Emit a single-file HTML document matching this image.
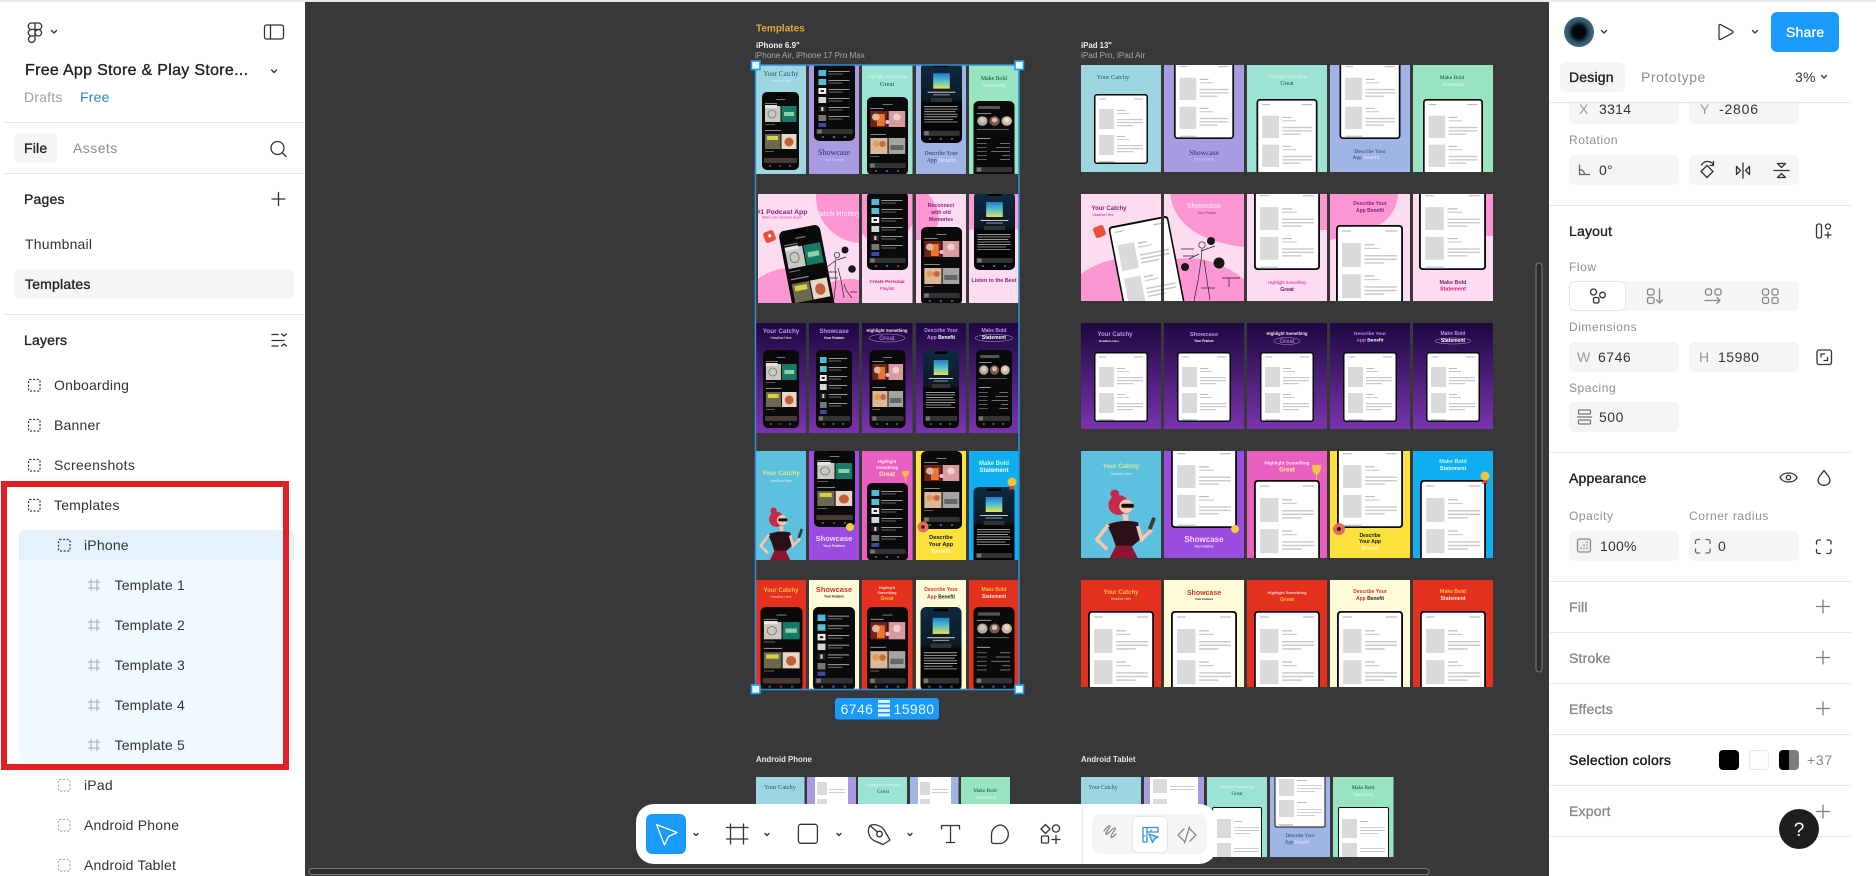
<!DOCTYPE html>
<html lang="en"><head><meta charset="utf-8"><title>Free App Store &amp; Play Store - Figma</title>
<style>
*{box-sizing:border-box;margin:0;padding:0}
html{width:1876px;height:876px;overflow:hidden;background:#383838}
body{width:1876px;height:876px;overflow:hidden;background:#383838;font-family:"Liberation Sans",Arial,sans-serif;position:relative;filter:blur(.3px)}
#cv,#ic{position:absolute;left:0;top:0;width:1876px;height:876px}
#ic{z-index:5;pointer-events:none}
.pn{position:absolute;background:#fff;top:0;height:876px}
.top{position:absolute;left:0;top:0;width:1876px;height:2px;background:#e9e9e9;z-index:6}
.t{position:absolute;white-space:nowrap;line-height:20px;height:20px;margin-top:-10px;font-size:14px;letter-spacing:.2px;color:#333;z-index:4}
.b{-webkit-text-stroke:.35px currentColor;color:#222}
.g{color:#8d8d8d}
.l{font-size:12px;letter-spacing:.55px;color:#8f8f8f}
.h{position:absolute;height:1px;background:#e6e6e6;z-index:3}
.i{position:absolute;background:#f5f5f5;border-radius:6px;z-index:2}
.sv{fill:none;stroke:#333;stroke-width:1.3;stroke-linecap:round;stroke-linejoin:round}
#cv text{font-family:"Liberation Sans",Arial,sans-serif;text-anchor:middle;font-weight:bold}
#cv text.s{font-family:"Liberation Serif",serif;font-weight:normal}
#cv text.n{font-weight:normal}
#cv text.a{text-anchor:start}
</style></head><body>

<svg id="cv" viewBox="0 0 1876 876" xmlns="http://www.w3.org/2000/svg">
<defs>
<linearGradient id="sky" x1="0" y1="0" x2="0" y2="1"><stop offset="0" stop-color="#1c7fd0"/><stop offset=".6" stop-color="#68c8c0"/><stop offset="1" stop-color="#f0e040"/></linearGradient>
<linearGradient id="nv" x1="0" y1="0" x2="0" y2="1"><stop offset="0" stop-color="#0e2a40"/><stop offset=".45" stop-color="#0c1a26"/><stop offset=".5" stop-color="#050505"/></linearGradient>
<linearGradient id="pu" x1="0" y1="0" x2="0" y2="1"><stop offset="0" stop-color="#1c0740"/><stop offset="1" stop-color="#7a35ae"/></linearGradient>

<symbol id="A" viewBox="0 0 37 78" preserveAspectRatio="none"><rect width="37" height="78" rx="5" fill="#0a0a0a"/><rect x="13" y="1.5" width="11" height="2.5" rx="1.2" fill="#000"/><rect x="14" y="7" width="9" height="1" fill="#777"/><rect x="3" y="11" width="12" height="1" fill="#777"/><rect x="3" y="14" width="15.500" height="16" fill="#c9c9c2"/><circle cx="10" cy="22" r="4" fill="none" stroke="#777" stroke-width=".8"/><rect x="3" y="13" width="12" height="3" fill="#e8e4dc"/><rect x="19.500" y="14" width="15" height="16" fill="#177a68"/><rect x="22" y="20" width="10" height="4" fill="#8ed0a0"/><rect x="3" y="32" width="10" height=".9" fill="#666"/><rect x="3" y="38" width="16" height="1" fill="#888"/><rect x="3" y="42" width="15.500" height="15" fill="#6b6a50"/><rect x="5" y="44" width="11" height="4" fill="#d8d040"/><rect x="19.500" y="42" width="15" height="15" fill="#e6d8c4"/><circle cx="27" cy="50" r="4.500" fill="#c0603a"/><rect x="3" y="59" width="9" height=".9" fill="#666"/><rect x="2" y="66" width="33" height="5" rx="1" fill="#4a3a36"/><rect x="7" y="73" width="2" height="2" fill="#555"/><rect x="17" y="73" width="2" height="2" fill="#7a2a2a"/><rect x="27" y="73" width="2" height="2" fill="#555"/></symbol>

<symbol id="B" viewBox="0 0 37 78" preserveAspectRatio="none"><rect width="37" height="78" rx="5" fill="#0a0a0a"/><rect x="4" y="7" width="7" height="6" fill="#4fb7d8"/><rect x="13" y="8" width="19" height="1" fill="#999"/><rect x="13" y="10.500" width="13" height="1" fill="#666"/><rect x="4" y="16" width="7" height="6" fill="#59bfd0"/><rect x="13" y="17" width="19" height="1" fill="#999"/><rect x="13" y="19.500" width="13" height="1" fill="#666"/><rect x="4" y="25" width="7" height="6" fill="#eeeeee"/><rect x="6" y="27" width="3" height="2" fill="#223"/><rect x="13" y="26" width="19" height="1" fill="#999"/><rect x="13" y="28.500" width="13" height="1" fill="#666"/><rect x="4" y="34" width="7" height="6" fill="#cfd8d8"/><rect x="13" y="35" width="19" height="1" fill="#999"/><rect x="13" y="37.500" width="13" height="1" fill="#666"/><rect x="4" y="43" width="7" height="6" fill="#222"/><rect x="6.500" y="44" width="2" height="4" fill="#ccc"/><rect x="13" y="44" width="19" height="1" fill="#999"/><rect x="13" y="46.500" width="13" height="1" fill="#666"/><rect x="4" y="52" width="7" height="6" fill="#777"/><rect x="13" y="53" width="19" height="1" fill="#999"/><rect x="13" y="55.500" width="13" height="1" fill="#666"/><rect x="4" y="60" width="7" height="4" fill="#3a4aa0"/><rect x="2" y="66" width="33" height="5" rx="1" fill="#333"/><rect x="3" y="66.500" width="4" height="4" fill="#777"/><rect x="7" y="73" width="2" height="2" fill="#555"/><rect x="17" y="73" width="2" height="2" fill="#55a"/><rect x="27" y="73" width="2" height="2" fill="#555"/></symbol>

<symbol id="C" viewBox="0 0 37 78" preserveAspectRatio="none"><rect width="37" height="78" rx="5" fill="#0a0a0a"/><rect x="14" y="7" width="9" height="1" fill="#777"/><rect x="3" y="11" width="12" height="1" fill="#888"/><rect x="3" y="14" width="15.500" height="16" fill="#6e2416"/><rect x="9" y="17" width="7" height="12" fill="#e8762c"/><circle cx="8" cy="20" r="3.500" fill="#e0b4a0"/><rect x="19.500" y="14" width="15" height="16" fill="#d79aa0"/><circle cx="27" cy="20" r="3.500" fill="#f0d0c4"/><circle cx="18.500" cy="25" r="2" fill="#f0b8e8"/><rect x="3" y="37" width="14" height="1" fill="#888"/><rect x="3" y="41" width="15.500" height="16" fill="#dcb898"/><circle cx="8" cy="47" r="3" fill="#d8a050"/><circle cx="14" cy="47" r="3" fill="#c86a3c"/><rect x="19.500" y="41" width="15" height="16" fill="#a4a4a0"/><rect x="21" y="48" width="12" height="5" fill="#666"/><rect x="3" y="59" width="8" height=".9" fill="#666"/><rect x="2" y="66" width="33" height="5" rx="1" fill="#333"/><rect x="3" y="66.500" width="4" height="4" fill="#777"/><rect x="7" y="73" width="2" height="2" fill="#555"/><rect x="17" y="73" width="2" height="2" fill="#55a"/><rect x="27" y="73" width="2" height="2" fill="#555"/></symbol>

<symbol id="D" viewBox="0 0 37 78" preserveAspectRatio="none"><rect width="37" height="78" rx="5" fill="url(#nv)"/><rect x="12" y="1.500" width="13" height="2.500" rx="1.200" fill="#000"/><rect x="11" y="10" width="15" height="15" fill="url(#sky)"/><rect x="6" y="28" width="25" height="1" fill="#ccc"/><rect x="11" y="30.500" width="15" height="1" fill="#999"/><rect x="9" y="34" width="19" height="4" rx="1" fill="#333"/><rect x="3" y="42" width="30" height=".9" fill="#aaa"/><rect x="3" y="44.500" width="30" height=".9" fill="#999"/><rect x="3" y="47" width="28" height=".9" fill="#aaa"/><rect x="3" y="49.500" width="30" height=".9" fill="#999"/><rect x="3" y="52" width="30" height=".9" fill="#aaa"/><rect x="3" y="54.500" width="26" height=".9" fill="#999"/><rect x="3" y="57" width="30" height=".9" fill="#888"/><rect x="2" y="66" width="33" height="5" rx="1" fill="#333"/><rect x="3" y="66.500" width="4" height="4" fill="#777"/><rect x="7" y="73" width="2" height="2" fill="#555"/><rect x="17" y="73" width="2" height="2" fill="#55a"/><rect x="27" y="73" width="2" height="2" fill="#555"/></symbol>

<symbol id="E" viewBox="0 0 37 78" preserveAspectRatio="none"><rect width="37" height="78" rx="5" fill="#0a0a0a"/><rect x="4" y="5" width="20" height="3" rx="1" fill="#555"/><rect x="3" y="12" width="13" height="1" fill="#888"/><circle cx="8" cy="20" r="4.700" fill="#aab0a8"/><circle cx="8" cy="19" r="2.400" fill="#e0c8b8"/><circle cx="19" cy="20" r="4.700" fill="#7a5a50"/><circle cx="19" cy="19" r="2.400" fill="#e8b8a8"/><circle cx="30" cy="20" r="4.700" fill="#cdb9a0"/><circle cx="30" cy="19" r="2.400" fill="#f0d8c8"/><rect x="3" y="28" width="29" height=".9" fill="#666"/><rect x="3" y="37" width="12" height="1" fill="#999"/><rect x="3" y="42" width="9" height=".9" fill="#666"/><rect x="24" y="42" width="9" height=".9" fill="#777"/><rect x="3" y="46" width="9" height=".9" fill="#666"/><rect x="20" y="46" width="13" height=".9" fill="#777"/><rect x="3" y="50" width="9" height=".9" fill="#666"/><rect x="16" y="50" width="17" height=".9" fill="#777"/><rect x="3" y="54" width="9" height=".9" fill="#666"/><rect x="26" y="54" width="7" height=".9" fill="#777"/><rect x="3" y="58" width="9" height=".9" fill="#666"/><rect x="24" y="58" width="9" height=".9" fill="#777"/><rect x="2" y="66" width="33" height="5" rx="1" fill="#333"/><rect x="3" y="66.500" width="4" height="4" fill="#777"/><rect x="7" y="73" width="2" height="2" fill="#555"/><rect x="17" y="73" width="2" height="2" fill="#55a"/><rect x="27" y="73" width="2" height="2" fill="#555"/></symbol>

<symbol id="T" viewBox="0 0 54 70" preserveAspectRatio="none"><rect width="54" height="70" rx="3" fill="#0a0a0a"/><rect x="1.500" y="1.500" width="51" height="67" rx="1.800" fill="#fff"/><rect x="5" y="4.500" width="7" height="1" fill="#bbb"/><rect x="40" y="4.500" width="9" height="1" fill="#bbb"/><rect x="5" y="15" width="15" height="20" fill="#d8dadb"/><rect x="23" y="16" width="8" height="1" fill="#bbb"/><rect x="23" y="19" width="12" height="1" fill="#ccc"/><rect x="23" y="25" width="26" height="1.200" fill="#c8c8c8"/><rect x="23" y="28" width="26" height="1.200" fill="#c8c8c8"/><rect x="23" y="31" width="16" height="1.200" fill="#c8c8c8"/><rect x="5" y="41" width="15" height="20" fill="#d8dadb"/><rect x="23" y="42" width="8" height="1" fill="#bbb"/><rect x="23" y="45" width="12" height="1" fill="#ccc"/><rect x="23" y="51" width="26" height="1.200" fill="#c8c8c8"/><rect x="23" y="54" width="26" height="1.200" fill="#c8c8c8"/><rect x="23" y="57" width="16" height="1.200" fill="#c8c8c8"/><rect x="5" y="67" width="15" height="1.500" fill="#ccc"/></symbol>

<symbol id="W" viewBox="0 0 50 56" preserveAspectRatio="none"><circle cx="17" cy="4" r="3.500" fill="#c42a4c"/><circle cx="20" cy="13" r="8" fill="#c42a4c"/><path d="M23 20l1 7h3l1-6z" fill="#f6c8ae"/><circle cx="26" cy="14" r="5.500" fill="#f6c8ae"/><rect x="22" y="12" width="10" height="3.200" rx="1.500" fill="#111"/><path d="M11 29q12-5 24-2l3 13-8 7H18l-3-9z" fill="#2b1018"/><path d="M18 46h12l5 10H13z" fill="#8e1433"/><path d="M12 29L3 41l8 8" fill="none" stroke="#f6c8ae" stroke-width="2.800"/><path d="M35 30l3 11 8-8" fill="none" stroke="#f6c8ae" stroke-width="2.800"/><rect x="44.500" y="23" width="3" height="10" rx="1" fill="#3a3a3a" transform="rotate(20 46 28)"/></symbol>
</defs>

<text class="a" x="756" y="31.500" fill="#e3a73e" font-size="10">Templates</text>
<text class="a" x="756" y="48" fill="#ededed" font-size="8">iPhone 6.9"</text>
<text class="a n" x="755" y="58" fill="#a8a8a8" font-size="8.100">iPhone Air, iPhone 17 Pro Max</text>
<text class="a" x="1081" y="48" fill="#ededed" font-size="7.800">iPad  13"</text>
<text class="a n" x="1081" y="58" fill="#a8a8a8" font-size="8.200">iPad Pro, iPad Air</text>

<!-- iPhone row 1 -->
<svg x="756" y="65" width="50" height="109"><rect width="50" height="109" fill="#9dd5e1"/><text class="s" x="25" y="11" fill="#1f5672" font-size="7">Your Catchy</text><text class="n" x="25" y="17" fill="#c8eef6" font-size="3.200">Headline Here</text><use href="#A" x="6" y="27" width="37" height="78"/></svg>
<svg x="809" y="65" width="50" height="109"><rect width="50" height="109" fill="#a99be0"/><use href="#B" x="5" y="-2" width="41" height="78"/><text class="s" x="25" y="90" fill="#28306f" font-size="8">Showcase</text><text class="n" x="25" y="96" fill="#d8d0fa" font-size="3.400">Your Feature</text></svg>
<svg x="862" y="65" width="50.500" height="109"><rect width="51" height="109" fill="#9ce3d4"/><text class="n" x="25" y="13" fill="#d8fbf0" font-size="4.300">Highlight Something</text><text class="s" x="25" y="21" fill="#154f5c" font-size="6.500">Great</text><use href="#C" x="5" y="32" width="41" height="78"/></svg>
<svg x="916" y="65" width="50" height="109"><rect width="50" height="109" fill="#a0b5e6"/><use href="#D" x="5" y="-2" width="41" height="80"/><text class="s" x="25" y="90" fill="#26356f" font-size="5.800">Describe Your</text><text class="s" x="25" y="97" fill="#26356f" font-size="5.800">App <tspan fill="#e4ecff">Benefit</tspan></text></svg>
<svg x="969" y="65" width="50" height="109"><rect width="50" height="109" fill="#98e3c0"/><text class="s" x="25" y="15" fill="#0e4a38" font-size="5.800">Make Bold</text><text class="s" x="25" y="22" fill="#d8fbec" font-size="5.800">Statement</text><use href="#E" x="4.500" y="36" width="41" height="78"/></svg>

<!-- iPhone row 2 -->
<svg x="758" y="194" width="101" height="109"><rect width="101" height="109" fill="#fbdcf0"/><rect width="50" height="109" fill="#fddcf0"/><circle cx="104" cy="3" r="46" fill="#fc97d3"/><path d="M0 85Q20 70 45 76V109H0z" fill="#fc97d3"/><path d="M65 92Q85 82 101 86V109H65z" fill="#fc97d3"/><text x="24" y="20" fill="#8c1f78" font-size="6.800">#1 Podcast App</text><text class="n" x="24" y="24.500" fill="#e0409a" font-size="3.300">Watch your favourite shows</text><text x="79" y="22" fill="#fdd9ef" font-size="7.200">Watch History</text><rect x="6" y="37" width="11" height="11" rx="2.500" fill="#ec4f38" transform="rotate(-22 11.500 42.500)"/><path d="M10 42l1.500 2 2-2a1 1 0 0 0-3.500 0z" fill="#fff"/><g transform="translate(20,38) rotate(-11)"><use href="#A" width="42" height="100"/></g><g fill="none" stroke="#222" stroke-width=".7"><circle cx="79" cy="61" r="2.700"/><path d="M78 64l-1 10 1 12-2 19M80 74l3 12 3 18M79 66l9-3M77 67l-8 6M69 78h10M72 84h8"/><path d="M86 90l2 6 6 8M92 98h7"/></g><circle cx="87" cy="56" r="3.500" fill="#161616"/><circle cx="94" cy="75" r="3.800" fill="#161616"/></svg>
<svg x="862" y="194" width="50.500" height="109"><rect width="51" height="109" fill="#fbdcf0"/><path d="M0 0H51V30Q40 48 20 48Q8 48 0 40z" fill="#fc97d3"/><use href="#B" x="5" y="-2" width="41" height="78"/><text x="25" y="89" fill="#c41a80" font-size="4.600">Create Personal</text><text class="n" x="25" y="96" fill="#c41a80" font-size="4.600">Playlist</text></svg>
<svg x="916" y="194" width="50" height="109"><rect width="50" height="109" fill="#fbdcf0"/><path d="M0 0H12Q32 22 14 46Q6 46 0 46z" fill="#fc97d3"/><text x="25" y="13" fill="#8c1f78" font-size="5.200">Reconnect</text><text x="25" y="20" fill="#8c1f78" font-size="5.200">with old</text><text x="25" y="27" fill="#8c1f78" font-size="5.200">Memories</text><use href="#C" x="5" y="33" width="41" height="78"/></svg>
<svg x="969" y="194" width="50" height="109"><rect width="50" height="109" fill="#fbdcf0"/><path d="M0 0H50V36Q30 30 0 36z" fill="#fc97d3" opacity=".9"/><use href="#D" x="5" y="-2" width="41" height="78"/><text x="25" y="88" fill="#8c1f78" font-size="5.400">Listen to the Best</text></svg>

<!-- iPhone row 3 -->
<svg x="756" y="323" width="50" height="110"><rect width="50" height="110" fill="url(#pu)"/><text x="25" y="10" fill="#c68cf5" font-size="6.300">Your Catchy</text><text class="n" x="25" y="16" fill="#eee" font-size="3.300">Headline Here</text><use href="#A" x="7" y="27" width="36" height="78"/></svg>
<svg x="809" y="323" width="50" height="110"><rect width="50" height="110" fill="url(#pu)"/><text x="25" y="10" fill="#c68cf5" font-size="6">Showcase</text><text x="25" y="16" fill="#eee" font-size="3.400">Your Feature</text><use href="#B" x="7" y="27" width="36" height="78"/></svg>
<svg x="862" y="323" width="50.500" height="110"><rect width="51" height="110" fill="url(#pu)"/><text x="25" y="9" fill="#f0e6fa" font-size="4.200">Highlight Something</text><text class="n" x="25" y="17" fill="#c68cf5" font-size="6.200">Great</text><ellipse cx="25" cy="15" rx="18" ry="4" fill="none" stroke="#d7c6f0" stroke-width=".4"/><use href="#C" x="7.500" y="27" width="36" height="78"/></svg>
<svg x="916" y="323" width="50" height="110"><rect width="50" height="110" fill="url(#pu)"/><text x="25" y="9" fill="#c68cf5" font-size="5">Describe Your</text><text x="25" y="16" fill="#c68cf5" font-size="5">App <tspan fill="#fff">Benefit</tspan></text><use href="#D" x="7" y="27" width="36" height="78"/></svg>
<svg x="969" y="323" width="50" height="110"><rect width="50" height="110" fill="url(#pu)"/><text x="25" y="9" fill="#c68cf5" font-size="5">Make Bold</text><text x="25" y="16" fill="#fff" font-size="5">Statement</text><ellipse cx="25" cy="15" rx="19" ry="3.500" fill="none" stroke="#d7c6f0" stroke-width=".4"/><use href="#E" x="7" y="27" width="36" height="78"/></svg>

<!-- iPhone row 4 -->
<svg x="756" y="451" width="50" height="109"><rect width="50" height="109" fill="#5cc0de"/><text x="25" y="24" fill="#d8f08e" font-size="6.500">Your Catchy</text><text class="n" x="25" y="31" fill="#d6f2fb" font-size="3.400">Headline Here</text><use href="#W" x="2" y="56" width="46" height="53"/></svg>
<svg x="809" y="451" width="50" height="109"><rect width="50" height="109" fill="#9a4be0"/><use href="#A" x="5" y="-2" width="41" height="78"/><circle cx="41" cy="76" r="4" fill="#f6cf3e"/><text x="25" y="90" fill="#f8d8f8" font-size="7.500">Showcase</text><text x="25" y="96" fill="#f0e8fa" font-size="3.600">Your Feature</text></svg>
<svg x="862" y="451" width="50.500" height="109"><rect width="51" height="109" fill="#e85fc0"/><text x="25" y="12" fill="#fde6f8" font-size="4.300">Highlight</text><text x="25" y="18" fill="#fde6f8" font-size="4.300">Something</text><text x="25" y="25" fill="#fdf09a" font-size="6">Great</text><path d="M41 20h6q0 5-3 6v5h-1v-5q-3-1-3-6z" fill="#f2c53e"/><use href="#B" x="5" y="32" width="41" height="78"/></svg>
<svg x="916" y="451" width="50" height="109"><rect width="50" height="109" fill="#fde23e"/><use href="#C" x="5" y="0" width="41" height="78"/><circle cx="7" cy="76" r="5.500" fill="#ea6a5e"/><circle cx="7" cy="76" r="1.800" fill="#311"/><text x="25" y="88" fill="#141414" font-size="5.600">Describe</text><text x="25" y="95" fill="#141414" font-size="5.600">Your App</text><text x="25" y="102" fill="#fff8c8" font-size="5.600">Benefit</text></svg>
<svg x="969" y="451" width="50" height="109"><rect width="50" height="109" fill="#10aef0"/><text x="25" y="14" fill="#c2fbd8" font-size="6">Make Bold</text><text x="25" y="21" fill="#e8fff2" font-size="6">Statement</text><use href="#D" x="4.500" y="36" width="41" height="78"/><circle cx="43" cy="31" r="4.500" fill="#f3c33a"/><path d="M41 35l-1 4 3-1 3 1-1-4z" fill="#d64a30"/></svg>

<!-- iPhone row 5 -->
<svg x="756" y="580" width="50" height="109"><rect width="50" height="109" fill="#e3301f"/><text x="25" y="12" fill="#f8c03c" font-size="6">Your Catchy</text><text class="n" x="25" y="18" fill="#f6d0a0" font-size="3.300">Headline Here</text><use href="#A" x="4.500" y="27" width="42" height="84"/></svg>
<svg x="809" y="580" width="50" height="109"><rect width="50" height="109" fill="#fdfbd8"/><text x="25" y="12" fill="#d43426" font-size="7.400">Showcase</text><text x="25" y="17.500" fill="#222" font-size="3.300">Your Feature</text><use href="#B" x="4" y="27" width="42" height="84"/></svg>
<svg x="862" y="580" width="50.500" height="109"><rect width="51" height="109" fill="#e3301f"/><text x="25" y="9" fill="#f8d8d0" font-size="3.700">Highlight</text><text x="25" y="14" fill="#f8d8d0" font-size="3.700">Something</text><text x="25" y="20" fill="#f8c03c" font-size="5">Great</text><use href="#C" x="5" y="27" width="41" height="84"/></svg>
<svg x="916" y="580" width="50" height="109"><rect width="50" height="109" fill="#fdfbd8"/><text x="25" y="11" fill="#d43426" font-size="5">Describe Your</text><text x="25" y="18.500" fill="#d43426" font-size="5">App <tspan fill="#222">Benefit</tspan></text><use href="#D" x="4.500" y="27" width="41" height="84"/></svg>
<svg x="969" y="580" width="50" height="109"><rect width="50" height="109" fill="#e3301f"/><text x="25" y="11" fill="#f8c03c" font-size="5">Make Bold</text><text x="25" y="18" fill="#f8e8d8" font-size="5">Statement</text><use href="#E" x="4.500" y="27" width="41" height="84"/></svg>

<!-- iPad row 1 -->
<svg x="1081" y="65" width="80" height="107"><rect width="80" height="107" fill="#9dd5e1"/><text class="s" x="32" y="14" fill="#1f5672" font-size="6.500">Your Catchy</text><use href="#T" x="13" y="29" width="54" height="70"/></svg>
<svg x="1164" y="65" width="80" height="107"><rect width="80" height="107" fill="#a99be0"/><use href="#T" x="10" y="-4" width="60" height="78"/><text class="s" x="40" y="90" fill="#28306f" font-size="7.500">Showcase</text><text class="n" x="40" y="95.500" fill="#d8d0fa" font-size="3.500">Your Feature</text></svg>
<svg x="1247" y="65" width="80" height="107"><rect width="80" height="107" fill="#9ce3d4"/><text class="n" x="41" y="13" fill="#d8fbf0" font-size="4.200">Highlight Something</text><text class="s" x="40" y="20" fill="#154f5c" font-size="6">Great</text><use href="#T" x="9.500" y="34" width="61" height="78"/></svg>
<svg x="1330" y="65" width="80" height="107"><rect width="80" height="107" fill="#a0b5e6"/><use href="#T" x="9.500" y="-4" width="61" height="78"/><text class="s" x="40" y="88" fill="#26356f" font-size="5.500">Describe Your</text><text class="s" x="36" y="94" fill="#26356f" font-size="5.500">App <tspan fill="#e4ecff">Benefit</tspan></text></svg>
<svg x="1413" y="65" width="80" height="107"><rect width="80" height="107" fill="#98e3c0"/><text class="s" x="39" y="14" fill="#0e4a38" font-size="5.500">Make Bold</text><text class="s" x="40" y="21" fill="#d8fbec" font-size="5.500">Statement</text><use href="#T" x="10" y="34" width="60" height="78"/></svg>

<!-- iPad row 2 -->
<svg x="1081" y="194" width="163" height="107"><rect width="163" height="107" fill="#fddcf0"/><path d="M89 0Q95 45 163 53V0z" fill="#fc97d3"/><path d="M0 80Q20 65 50 63V107H0z" fill="#fc97d3"/><path d="M95 65Q130 60 163 85V107H95z" fill="#fc97d3"/><text x="28" y="16" fill="#8c1f78" font-size="6">Your Catchy</text><text class="n" x="22" y="22" fill="#c4268a" font-size="3.300">Headline Here</text><text x="123" y="14" fill="#fdd9ef" font-size="7">Showcase</text><text class="n" x="126" y="20" fill="#b0107a" font-size="3.300">Your Feature</text><rect x="13" y="32" width="11" height="11" rx="2.500" fill="#ec4f38" transform="rotate(-22 18.500 37.500)"/><g transform="translate(27,33) rotate(-11)"><use href="#T" width="61" height="92"/></g><g fill="none" stroke="#222" stroke-width=".7"><circle cx="121" cy="51" r="3.200"/><path d="M121 55l-1 12-3 20-4 20M123 66l3 20 3 20M120 57l14-5M118 60l-10 5M100 55h13M102 62h12M120 94h14M141 84h18M148 84v9"/></g><circle cx="130" cy="47" r="4" fill="#161616"/><circle cx="104" cy="73" r="4" fill="#161616"/><circle cx="138" cy="69" r="5.500" fill="#161616"/><rect x="80" y="0" width="3" height="107" fill="#383838"/></svg>
<svg x="1247" y="194" width="80" height="107"><rect width="80" height="107" fill="#fbdcf0"/><rect x="70" width="10" height="36" fill="#fc97d3"/><use href="#T" x="7" y="-4" width="66" height="80"/><text class="n" x="40" y="90" fill="#c41a80" font-size="4.200">Highlight Something</text><text x="40" y="97" fill="#6a1450" font-size="5.200">Great</text></svg>
<svg x="1330" y="194" width="80" height="107"><rect width="80" height="107" fill="#fbdcf0"/><path d="M0 0H68Q66 30 30 38Q10 44 0 46z" fill="#fc97d3"/><text x="40" y="11" fill="#8c1f78" font-size="5">Describe Your</text><text x="40" y="18" fill="#8c1f78" font-size="5">App Benefit</text><use href="#T" x="6" y="31" width="67" height="84"/></svg>
<svg x="1413" y="194" width="80" height="107"><rect width="80" height="107" fill="#fbdcf0"/><rect x="72" width="8" height="42" fill="#fc97d3"/><use href="#T" x="6" y="-4" width="67" height="80"/><text x="40" y="90" fill="#8c1f78" font-size="5.400">Make Bold</text><text x="40" y="96.500" fill="#c41a80" font-size="5.400">Statement</text></svg>

<!-- iPad row 3 -->
<svg x="1081" y="323" width="80" height="106"><rect width="80" height="106" fill="url(#pu)"/><text x="34" y="13" fill="#c68cf5" font-size="6">Your Catchy</text><text x="28" y="19" fill="#eee" font-size="3">Headline Here</text><use href="#T" x="13" y="29" width="54" height="70"/></svg>
<svg x="1164" y="323" width="80" height="106"><rect width="80" height="106" fill="url(#pu)"/><text x="40" y="13" fill="#c68cf5" font-size="5.800">Showcase</text><text x="40" y="19" fill="#eee" font-size="3.200">Your Feature</text><use href="#T" x="13" y="29" width="54" height="70"/></svg>
<svg x="1247" y="323" width="80" height="106"><rect width="80" height="106" fill="url(#pu)"/><text x="40" y="12" fill="#f0e6fa" font-size="4.200">Highlight Something</text><text class="n" x="40" y="20" fill="#c68cf5" font-size="6">Great</text><ellipse cx="40" cy="18" rx="13" ry="3.500" fill="none" stroke="#d7c6f0" stroke-width=".4"/><use href="#T" x="13" y="29" width="54" height="70"/></svg>
<svg x="1330" y="323" width="80" height="106"><rect width="80" height="106" fill="url(#pu)"/><text x="40" y="12" fill="#c68cf5" font-size="4.800">Describe Your</text><text x="40" y="18.500" fill="#c68cf5" font-size="4.800">App <tspan fill="#fff">Benefit</tspan></text><use href="#T" x="13" y="29" width="54" height="70"/></svg>
<svg x="1413" y="323" width="80" height="106"><rect width="80" height="106" fill="url(#pu)"/><text x="40" y="12" fill="#c68cf5" font-size="5">Make Bold</text><text x="40" y="19" fill="#fff" font-size="5">Statement</text><ellipse cx="40" cy="18" rx="18" ry="3" fill="none" stroke="#d7c6f0" stroke-width=".4"/><use href="#T" x="13" y="29" width="54" height="70"/></svg>

<!-- iPad row 4 -->
<svg x="1081" y="451" width="80" height="107"><rect width="80" height="107" fill="#5cc0de"/><text x="40" y="17" fill="#d8f08e" font-size="6.300">Your Catchy</text><text class="n" x="40" y="24" fill="#d6f2fb" font-size="3.300">Headline Here</text><use href="#W" x="12" y="38" width="64" height="69"/></svg>
<svg x="1164" y="451" width="80" height="107"><rect width="80" height="107" fill="#9a4be0"/><use href="#T" x="7" y="-3" width="66" height="80"/><circle cx="71" cy="78" r="4" fill="#f6cf3e"/><text x="40" y="91" fill="#f8d8f8" font-size="8">Showcase</text><text x="40" y="96.500" fill="#f0e8fa" font-size="3.200">Your Feature</text></svg>
<svg x="1247" y="451" width="80" height="107"><rect width="80" height="107" fill="#e85fc0"/><text x="40" y="13.500" fill="#fde6f8" font-size="4.600">Highlight Something</text><text x="40" y="20.500" fill="#fdf09a" font-size="6">Great</text><path d="M65 14h9q0 8-4 10v7h-1v-7q-4-2-4-10z" fill="#f2c53e"/><use href="#T" x="7" y="29" width="66" height="84"/></svg>
<svg x="1330" y="451" width="80" height="107"><rect width="80" height="107" fill="#fde23e"/><use href="#T" x="7" y="-3" width="66" height="80"/><circle cx="9" cy="78" r="6" fill="#ea6a5e"/><circle cx="9" cy="78" r="2" fill="#311"/><text x="40" y="86" fill="#141414" font-size="5">Describe</text><text x="40" y="92" fill="#141414" font-size="5">Your App</text><text x="40" y="99" fill="#fff8c8" font-size="5">Benefit</text></svg>
<svg x="1413" y="451" width="80" height="107"><rect width="80" height="107" fill="#10aef0"/><text x="40" y="12" fill="#c2fbd8" font-size="5.500">Make Bold</text><text x="40" y="19" fill="#e8fff2" font-size="5.500">Statement</text><use href="#T" x="7" y="29" width="66" height="84"/><circle cx="72" cy="25" r="4.500" fill="#f3c33a"/><path d="M70 29l-1 4 3-1 3 1-1-4z" fill="#d64a30"/></svg>

<!-- iPad row 5 -->
<svg x="1081" y="580" width="80" height="107"><rect width="80" height="107" fill="#e3301f"/><text x="40" y="14" fill="#f8c03c" font-size="6">Your Catchy</text><text class="n" x="40" y="20" fill="#f6d0a0" font-size="3.200">Headline Here</text><use href="#T" x="7" y="31" width="66" height="84"/></svg>
<svg x="1164" y="580" width="80" height="107"><rect width="80" height="107" fill="#fdfbd8"/><text x="40" y="15" fill="#d43426" font-size="7">Showcase</text><text x="40" y="20" fill="#222" font-size="3">Your Feature</text><use href="#T" x="7" y="31" width="66" height="84"/></svg>
<svg x="1247" y="580" width="80" height="107"><rect width="80" height="107" fill="#e3301f"/><text x="40" y="14" fill="#f8d8d0" font-size="4">Highlight Something</text><text x="40" y="21" fill="#f8c03c" font-size="5.400">Great</text><use href="#T" x="7" y="31" width="66" height="84"/></svg>
<svg x="1330" y="580" width="80" height="107"><rect width="80" height="107" fill="#fdfbd8"/><text x="40" y="13" fill="#d43426" font-size="5">Describe Your</text><text x="40" y="20" fill="#d43426" font-size="5">App <tspan fill="#222">Benefit</tspan></text><use href="#T" x="7" y="31" width="66" height="84"/></svg>
<svg x="1413" y="580" width="80" height="107"><rect width="80" height="107" fill="#e3301f"/><text x="40" y="13" fill="#f8c03c" font-size="5.200">Make Bold</text><text x="40" y="20" fill="#f8e8d8" font-size="5.200">Statement</text><use href="#T" x="7" y="31" width="66" height="84"/></svg>

<!-- Selection -->
<rect x="755.500" y="65" width="263.500" height="624.500" fill="none" stroke="#2d8fd6" stroke-width="1.500"/>
<g fill="#e9f5ff" stroke="#1a9bfc" stroke-width="1.600"><rect x="751.500" y="61" width="8.500" height="8.500"/><rect x="1015" y="61" width="8.500" height="8.500"/><rect x="751.500" y="685" width="8.500" height="8.500"/><rect x="1015" y="685" width="8.500" height="8.500"/></g>
<rect x="835" y="698" width="104" height="21.500" rx="3" fill="#1a9bfc"/>
<text x="857" y="714" fill="#eaf6ff" font-size="14" class="n" letter-spacing=".4">6746</text>
<g fill="#dff1ff"><rect x="878" y="700" width="12" height="3"/><rect x="878" y="704.500" width="12" height="3"/><rect x="878" y="709" width="12" height="3"/><rect x="878" y="713.500" width="12" height="3"/></g>
<text x="914" y="714" fill="#eaf6ff" font-size="14" class="n" letter-spacing=".4">15980</text>

<!-- Android -->
<text class="a" x="756" y="762" fill="#e8e8e8" font-size="7.800">Android Phone</text>
<text class="a" x="1081" y="762" fill="#e8e8e8" font-size="7.800">Android Tablet</text>
<svg x="756" y="777" width="48.500" height="40"><rect width="49" height="40" fill="#9dd5e1"/><text class="s" x="24" y="12" fill="#1f5672" font-size="6.300">Your Catchy</text></svg>
<svg x="807" y="777" width="49" height="40"><rect width="49" height="40" fill="#a99be0"/><rect x="8" width="33" height="40" fill="#fff"/><rect x="10" y="5" width="10" height="13" fill="#d8dadb"/><rect x="22" y="12" width="16" height="1" fill="#ccc"/><rect x="22" y="15" width="16" height="1" fill="#ccc"/><rect x="10" y="22" width="10" height="10" fill="#d8dadb"/></svg>
<svg x="858" y="777" width="49" height="40"><rect width="49" height="40" fill="#9ce3d4"/><text class="n" x="25" y="9" fill="#d8fbf0" font-size="3.800">Highlight Something</text><text class="s" x="25" y="16" fill="#154f5c" font-size="5.500">Great</text></svg>
<svg x="910" y="777" width="48.500" height="40"><rect width="49" height="40" fill="#a0b5e6"/><rect x="8" width="33" height="40" fill="#fff"/><rect x="10" y="5" width="10" height="13" fill="#d8dadb"/><rect x="22" y="12" width="16" height="1" fill="#ccc"/><rect x="22" y="15" width="16" height="1" fill="#ccc"/><rect x="10" y="22" width="10" height="10" fill="#d8dadb"/></svg>
<svg x="961" y="777" width="49" height="40"><rect width="49" height="40" fill="#98e3c0"/><text class="s" x="24" y="15" fill="#0e4a38" font-size="5.200">Make Bold</text><text class="s" x="25" y="22" fill="#d8fbec" font-size="5.200">Statement</text></svg>

<svg x="1081" y="777" width="60" height="40"><rect width="60" height="40" fill="#9dd5e1"/><text class="s" x="22" y="12" fill="#1f5672" font-size="5.800">Your Catchy</text></svg>
<svg x="1144" y="777" width="60" height="40"><rect width="60" height="40" fill="#a99be0"/><rect x="6" width="48" height="40" fill="#fff"/><rect x="9" y="2" width="14" height="14" fill="#d8dadb"/><rect x="26" y="9" width="24" height="1" fill="#ccc"/><rect x="26" y="12" width="24" height="1" fill="#ccc"/><rect x="9" y="22" width="14" height="14" fill="#d8dadb"/></svg>
<svg x="1207" y="777" width="60" height="80"><rect width="60" height="80" fill="#9ce3d4"/><text class="n" x="30" y="11" fill="#d8fbf0" font-size="3.800">Highlight Something</text><text class="s" x="30" y="18" fill="#154f5c" font-size="5">Great</text><rect x="5.500" y="30.500" width="49" height="60" rx="1.500" fill="#fff" stroke="#111"/><rect x="10" y="42" width="14" height="19" fill="#d8dadb"/><rect x="27" y="44" width="8" height="1" fill="#bbb"/><rect x="27" y="50" width="25" height="1" fill="#ccc"/><rect x="27" y="53" width="25" height="1" fill="#ccc"/><rect x="27" y="56" width="16" height="1" fill="#ccc"/><rect x="10" y="66" width="14" height="14" fill="#d8dadb"/><rect x="27" y="71" width="25" height="1" fill="#ccc"/><rect x="27" y="74" width="25" height="1" fill="#ccc"/></svg>
<svg x="1270" y="777" width="60" height="80"><rect width="60" height="80" fill="#a0b5e6"/><rect x="5" y="-2" width="50" height="52" rx="1.500" fill="#fff" stroke="#111"/><rect x="9" y="2" width="15" height="17" fill="#d8dadb"/><rect x="27" y="3" width="10" height="1" fill="#bbb"/><rect x="27" y="8" width="25" height="1" fill="#ccc"/><rect x="27" y="11" width="25" height="1" fill="#ccc"/><rect x="27" y="14" width="18" height="1" fill="#ccc"/><rect x="9" y="23" width="15" height="17" fill="#d8dadb"/><rect x="27" y="25" width="10" height="1" fill="#bbb"/><rect x="27" y="32" width="25" height="1" fill="#ccc"/><rect x="27" y="35" width="25" height="1" fill="#ccc"/><rect x="27" y="38" width="18" height="1" fill="#ccc"/><rect x="9" y="47" width="14" height="2" fill="#ccc"/><text class="s" x="30" y="60" fill="#26356f" font-size="5">Describe Your</text><text class="s" x="27" y="66.500" fill="#26356f" font-size="5">App <tspan fill="#e4ecff">Benefit</tspan></text></svg>
<svg x="1333" y="777" width="60.500" height="80"><rect width="61" height="80" fill="#98e3c0"/><text class="s" x="30" y="12" fill="#0e4a38" font-size="5">Make Bold</text><text class="s" x="30" y="19" fill="#d8fbec" font-size="5">Statement</text><rect x="5.500" y="30.500" width="50" height="60" rx="1.500" fill="#fff" stroke="#111"/><rect x="9" y="42" width="15" height="19" fill="#d8dadb"/><rect x="27" y="44" width="8" height="1" fill="#bbb"/><rect x="27" y="50" width="25" height="1" fill="#ccc"/><rect x="27" y="53" width="25" height="1" fill="#ccc"/><rect x="27" y="56" width="18" height="1" fill="#ccc"/><rect x="9" y="66" width="15" height="14" fill="#d8dadb"/><rect x="27" y="71" width="25" height="1" fill="#ccc"/><rect x="27" y="74" width="25" height="1" fill="#ccc"/></svg>

<!-- Scrollbars -->
<rect x="309" y="868.500" width="1120" height="6" rx="3" fill="#2c2c2c" stroke="#7a7a7a"/>
<rect x="1536" y="263" width="6" height="409" rx="3" fill="#2c2c2c" stroke="#7a7a7a"/>
</svg>

<div class="top"></div>

<!-- LEFT -->
<div class="pn" style="left:0;width:305px"></div>
<div class="t b" style="left:25px;top:71px;font-size:16px;letter-spacing:.3px">Free App Store &amp; Play Store...</div>
<div class="t g" style="left:24px;top:97px;color:#a0a0a0">Drafts</div>
<div class="t" style="left:80px;top:97px;color:#2a8ad6">Free</div>
<div class="h" style="left:4px;top:122px;width:300px"></div>
<div class="i" style="left:14px;top:133px;width:43px;height:30px"></div>
<div class="t b" style="left:24px;top:148px">File</div>
<div class="t g" style="left:73px;top:148px;letter-spacing:.45px">Assets</div>
<div class="h" style="left:4px;top:173px;width:300px"></div>
<div class="t b" style="left:24px;top:199px">Pages</div>
<div class="t" style="left:25px;top:244px">Thumbnail</div>
<div class="i" style="left:14px;top:269px;width:280px;height:30px"></div>
<div class="t b" style="left:25px;top:284px">Templates</div>
<div class="h" style="left:4px;top:314px;width:300px"></div>
<div class="t b" style="left:24px;top:340px">Layers</div>
<div class="t" style="left:54px;top:385px">Onboarding</div>
<div class="t" style="left:54px;top:425px">Banner</div>
<div class="t" style="left:54px;top:465px;letter-spacing:.3px">Screenshots</div>
<div class="t" style="left:54px;top:505px">Templates</div>
<div style="position:absolute;left:19px;top:530px;width:275px;height:231px;background:#f0f9ff;border-radius:6px;z-index:1"></div>
<div style="position:absolute;left:19px;top:530px;width:275px;height:30px;background:#e3f2fd;border-radius:6px 6px 0 0;z-index:1"></div>
<div class="t" style="left:84px;top:545px">iPhone</div>
<div class="t" style="left:114.500px;top:585px">Template 1</div>
<div class="t" style="left:114.500px;top:625px">Template 2</div>
<div class="t" style="left:114.500px;top:665px">Template 3</div>
<div class="t" style="left:114.500px;top:705px">Template 4</div>
<div class="t" style="left:114.500px;top:745px">Template 5</div>
<div class="t" style="left:84px;top:785px">iPad</div>
<div class="t" style="left:84px;top:825px">Android Phone</div>
<div class="t" style="left:84px;top:865px">Android Tablet</div>
<div style="position:absolute;left:1px;top:481px;width:288px;height:289px;border:6px solid #e01f26;z-index:4"></div>

<!-- RIGHT -->
<div class="pn" style="left:1549px;width:327px"></div>
<div style="position:absolute;left:1771px;top:12px;width:68px;height:40px;background:#1a9bfc;border-radius:6px;z-index:2"></div>
<div class="t" style="left:1786px;top:32px;color:#fff;-webkit-text-stroke:.3px #fff">Share</div>
<div class="i" style="left:1560px;top:62px;width:65px;height:30px"></div>
<div class="t b" style="left:1569px;top:77px">Design</div>
<div class="t g" style="left:1641px;top:77px;letter-spacing:.55px">Prototype</div>
<div class="t" style="left:1795px;top:77px">3%</div>
<div class="h" style="left:1549px;top:102px;width:302px"></div>
<div class="i" style="left:1569px;top:103px;width:110px;height:21px;border-radius:0 0 6px 6px"></div>
<div class="i" style="left:1689px;top:103px;width:110px;height:21px;border-radius:0 0 6px 6px"></div>
<div class="t g" style="left:1579px;top:109px;color:#999">X</div>
<div class="t" style="left:1599px;top:109px;letter-spacing:.3px">3314</div>
<div class="t g" style="left:1700px;top:109px;color:#999">Y</div>
<div class="t" style="left:1719px;top:109px;letter-spacing:.8px">-2806</div>
<div class="t l" style="left:1569px;top:140px">Rotation</div>
<div class="i" style="left:1569px;top:155px;width:110px;height:30px"></div>
<div class="t" style="left:1599px;top:170px">0°</div>
<div class="i" style="left:1689px;top:155px;width:110px;height:30px"></div>
<div class="h" style="left:1549px;top:205px;width:302px"></div>
<div class="t b" style="left:1569px;top:231px">Layout</div>
<div class="t l" style="left:1569px;top:267px">Flow</div>
<div class="i" style="left:1569px;top:281px;width:230px;height:30px"></div>
<div class="i" style="left:1569px;top:281px;width:57px;height:30px;background:#fff;border:1px solid #e6e6e6"></div>
<div class="t l" style="left:1569px;top:327px">Dimensions</div>
<div class="i" style="left:1569px;top:342px;width:110px;height:30px"></div>
<div class="i" style="left:1689px;top:342px;width:110px;height:30px"></div>
<div class="t g" style="left:1577px;top:357px;color:#999">W</div>
<div class="t" style="left:1598px;top:357px;letter-spacing:.5px">6746</div>
<div class="t g" style="left:1699px;top:357px;color:#999">H</div>
<div class="t" style="left:1718px;top:357px;letter-spacing:.5px">15980</div>
<div class="t l" style="left:1569px;top:388px">Spacing</div>
<div class="i" style="left:1569px;top:402px;width:110px;height:30px"></div>
<div class="t" style="left:1599px;top:417px;letter-spacing:.5px">500</div>
<div class="h" style="left:1550px;top:452px;width:301px"></div>
<div class="t b" style="left:1569px;top:478px">Appearance</div>
<div class="t l" style="left:1569px;top:516px">Opacity</div>
<div class="t l" style="left:1689px;top:516px">Corner radius</div>
<div class="i" style="left:1569px;top:531px;width:110px;height:30px"></div>
<div class="i" style="left:1689px;top:531px;width:110px;height:30px"></div>
<div class="t" style="left:1600px;top:546px">100%</div>
<div class="t" style="left:1718px;top:546px">0</div>
<div class="h" style="left:1550px;top:581px;width:301px"></div>
<div class="t b" style="left:1569px;top:607px;color:#888">Fill</div>
<div class="h" style="left:1550px;top:632px;width:301px"></div>
<div class="t b" style="left:1569px;top:658px;color:#888">Stroke</div>
<div class="h" style="left:1550px;top:683px;width:301px"></div>
<div class="t b" style="left:1569px;top:709px;color:#888">Effects</div>
<div class="h" style="left:1550px;top:734px;width:301px"></div>
<div class="t b" style="left:1569px;top:760px;color:#111">Selection colors</div>
<div class="i" style="left:1719px;top:750px;width:20px;height:20px;background:#000;border-radius:4px"></div>
<div class="i" style="left:1749px;top:750px;width:20px;height:20px;background:#fff;border:1px solid #e8e8e8;border-radius:4px"></div>
<div class="i" style="left:1779px;top:750px;width:20px;height:20px;background:linear-gradient(90deg,#000 50%,#7c7c7c 50%);border-radius:4px"></div>
<div class="t" style="left:1807px;top:760px;color:#888;letter-spacing:.7px">+37</div>
<div class="h" style="left:1550px;top:785px;width:301px"></div>
<div class="t b" style="left:1569px;top:811px;color:#888">Export</div>
<div class="h" style="left:1550px;top:836px;width:301px"></div>

<!-- Toolbar -->
<div style="position:absolute;left:636px;top:804px;width:581px;height:60px;background:#fff;border-radius:18px;z-index:2"></div>
<div style="position:absolute;left:646px;top:814px;width:40px;height:40px;background:#1a9bfc;border-radius:6px;z-index:3"></div>
<div style="position:absolute;left:1082px;top:804px;width:1px;height:60px;background:#eaeaea;z-index:3"></div>
<div style="position:absolute;left:1092px;top:814px;width:115px;height:40px;background:#f5f5f5;border-radius:8px;z-index:3"></div>
<div style="position:absolute;left:1133px;top:817px;width:34px;height:35px;background:#fff;border-radius:5px;box-shadow:0 0 1.500px #bbb;z-index:3"></div>

<svg id="ic" viewBox="0 0 1876 876" xmlns="http://www.w3.org/2000/svg">
<defs><radialGradient id="av" cx=".5" cy=".5" r=".5"><stop offset="0" stop-color="#020204"/><stop offset=".42" stop-color="#05090d"/><stop offset=".72" stop-color="#2d5468"/><stop offset="1" stop-color="#3f6a7c"/></radialGradient></defs>
<g class="sv">
<!-- figma -->
<path d="M35 23h-3.500a3.250 3.250 0 0 0 0 6.500H35zM35 23h3.500a3.250 3.250 0 0 1 0 6.500H35zM35 29.500h-3.500a3.250 3.250 0 0 0 0 6.500H35zM35 36h-3.500a3.250 3.250 0 1 0 3.500 3.250z"/><circle cx="38.300" cy="32.750" r="3.250"/>
<path d="M51.500 30.500l2.500 2.500 2.500-2.500"/>
<rect x="264.500" y="25" width="19" height="14" rx="2"/><path d="M270.500 25v14"/>
<path d="M271.500 70l2.500 2.500 2.500-2.500"/>
<circle cx="277.500" cy="148" r="6.500"/><path d="M282.500 153l3.500 3.500"/>
<path d="M278.500 192.500v13M272 199h13"/>
<path d="M272 334.500h6M272 340.500h12M272 346h6M281.500 334l2.500 2 2.500-2M281.500 346l2.500-2 2.500 2"/>
<!-- dashed frames -->
<g stroke-dasharray="2 1.600" stroke-linecap="butt" stroke-width="1.200"><rect x="28.500" y="379.500" width="11.500" height="11.500" rx="1"/><rect x="28.500" y="419.500" width="11.500" height="11.500" rx="1"/><rect x="28.500" y="459.500" width="11.500" height="11.500" rx="1"/><rect x="28.500" y="499.500" width="11.500" height="11.500" rx="1"/><rect x="58.500" y="539.500" width="11.500" height="11.500" rx="1"/><g stroke="#aaa"><rect x="58.500" y="779.500" width="11.500" height="11.500" rx="1"/><rect x="58.500" y="819.500" width="11.500" height="11.500" rx="1"/><rect x="58.500" y="859.500" width="11.500" height="11.500" rx="1"/></g></g>
<g stroke="#b5b8ba" stroke-linecap="butt"><path d="M91 579v12M97 579v12M88 582h12M88 588h12"/><path d="M91 619v12M97 619v12M88 622h12M88 628h12"/><path d="M91 659v12M97 659v12M88 662h12M88 668h12"/><path d="M91 699v12M97 699v12M88 702h12M88 708h12"/><path d="M91 739v12M97 739v12M88 742h12M88 748h12"/></g>

<!-- right top -->
<path d="M1601.500 30.500l2.500 2.500 2.500-2.500"/>
<path d="M1719 25.500v13a1 1 0 0 0 1.500.9l12-6.500a1 1 0 0 0 0-1.800l-12-6.500a1 1 0 0 0-1.500.9z"/>
<path d="M1752.500 30.500l2.500 2.500 2.500-2.500"/>
<path d="M1821.500 75.500l2.500 2.500 2.500-2.500"/>
<!-- rotation row -->
<g stroke="#666"><path d="M1579.500 165v9.500h10M1579.500 169.500a5 5 0 0 1 5 5"/></g>
<path d="M1707 165.500l6 6-6 6-6-6zM1701.500 165a7 7 0 0 1 11-1.500l1 2M1713.500 161.500v4h-3.500"/>
<path d="M1743 163v15M1736.500 166.500v8l4-4zM1749.500 166.500v8l-4-4z"/>
<path d="M1774 170.500h15M1777.500 163.500h8l-4 4zM1777.500 177.500h8l-4-4z"/>
<!-- layout -->
<rect x="1816.500" y="224" width="5" height="14" rx="2"/><circle cx="1828" cy="226.500" r="2.500"/><path d="M1828 232v6M1825 235h6"/>
<circle cx="1593.500" cy="292" r="3"/><circle cx="1602.500" cy="295" r="2.800"/><rect x="1593.500" y="297.500" width="5.500" height="5.500" rx="1.500"/>
<g stroke="#888"><rect x="1647.500" y="289" width="6.500" height="6" rx="1.800"/><rect x="1647.500" y="297.500" width="6.500" height="6" rx="1.800"/><path d="M1659.500 289v14M1656.500 300l3 3 3-3"/><rect x="1705.500" y="289" width="6" height="6" rx="2"/><rect x="1715" y="289" width="6" height="6" rx="2"/><path d="M1705 300.500h15M1717 297.500l3 3-3 3"/><rect x="1762.500" y="289" width="6" height="6" rx="1.800"/><rect x="1772" y="289" width="6" height="6" rx="1.800"/><rect x="1762.500" y="297.500" width="6" height="6" rx="1.800"/><rect x="1772" y="297.500" width="6" height="6" rx="1.800"/></g>
<rect x="1817" y="350" width="14.500" height="14.500" rx="2"/><path d="M1821 357v-3h3.500M1827.500 357.500v3H1824"/>
<g stroke="#777"><rect x="1578.500" y="410" width="12" height="4" rx="1"/><path d="M1577.500 417h14"/><rect x="1578.500" y="420" width="12" height="4" rx="1"/></g>
<!-- appearance -->
<path d="M1780 477.500c3-6 14.500-6 17 0c-2.500 6-14 6-17 0z"/><circle cx="1788.500" cy="477.500" r="2.200"/>
<path d="M1824 470.500c-2.500 3.500-6 6.500-6 10a6 4.800 0 0 0 12 0c0-3.500-3.500-6.500-6-10z"/>
<rect x="1577.500" y="539" width="13" height="13" rx="2" fill="#eee" stroke="#888"/><path d="M1587 542v.5M1584 545v.5M1587 545v.5M1581 548v.5M1584 548v.5M1587 548v.5" stroke="#888"/>
<path stroke="#666" d="M1695.500 543.500v-2a2 2 0 0 1 2-2h2M1706 539.500h2a2 2 0 0 1 2 2v2M1710 549v2a2 2 0 0 1-2 2h-2M1699.500 553h-2a2 2 0 0 1-2-2v-2"/>
<path d="M1816.500 544v-2a2 2 0 0 1 2-2h2M1827 540h2a2 2 0 0 1 2 2v2M1831 549.500v2a2 2 0 0 1-2 2h-2M1820.500 553.500h-2a2 2 0 0 1-2-2v-2"/>
<g stroke="#808080"><path d="M1823 600v13M1816.500 606.500h13"/><path d="M1823 651v13M1816.500 657.500h13"/><path d="M1823 702v13M1816.500 708.500h13"/><path d="M1823 805v13M1816.500 811.500h13"/></g>
<!-- toolbar -->
<path stroke="#fff" d="M656.500 824.500l20.500 8-8.500 4-4 8.500z"/>
<path d="M694 833.500l2 2 2-2M765 833.500l2 2 2-2M837 833.500l2 2 2-2M908 833.500l2 2 2-2"/>
<path d="M730.500 824v20M743.500 824v20M726.500 827.500h21.500M726.500 839h21.500"/>
<rect x="798.400" y="824.300" width="19" height="19" rx="2.500"/>
<path d="M870 825.500c5-2.500 13 1 15 6l5 8.500-7 4.500-8-3.500c-5-2-9-9-5-15.500zM870.500 826l7 6"/><circle cx="879.500" cy="834" r="2.800"/>
<path d="M941.500 829v-3.500h18v3.500M950.500 825.500v17M946.500 842.500h8"/>
<path d="M1001 825a9.500 9.500 0 0 1 0 18.500h-7.500a2 2 0 0 1-2-2v-7a9.500 9.500 0 0 1 9.500-9.500z"/>
<path d="M1045.500 824.500l4.500 4.500-4.500 4.500-4.500-4.500z"/><circle cx="1056" cy="828.500" r="3.600"/><rect x="1041.500" y="836" width="7" height="7" rx="1"/><path d="M1056 835.500v8M1052 839.500h8"/>
<g stroke="#888"><path d="M1104 831c2-3 5-6 6-5s-5 6-4 8 7-7 9-6-5 7-4 9c1 1 3-1 5-3"/><path d="M1184 829l-6 6 6 6M1190 829l6 6-6 6M1189.500 827l-5 16"/></g>
<g stroke="#3a8fe0"><path d="M1143 827.500h15v4.500h-11v10h-4zM1147 832v-4.500M1151 832v-2M1143 836h2"/><path d="M1149 834l9 3-3.500 2-2 3.500z" fill="#bfe0fb"/></g>
</g>
<circle cx="1579" cy="32" r="15" fill="url(#av)"/>
<circle cx="1799" cy="829" r="20" fill="#1e1e1e"/>
<text x="1799" y="836" text-anchor="middle" font-family="Liberation Sans,Arial,sans-serif" font-size="19" fill="#fff">?</text>
</svg>
</body></html>
